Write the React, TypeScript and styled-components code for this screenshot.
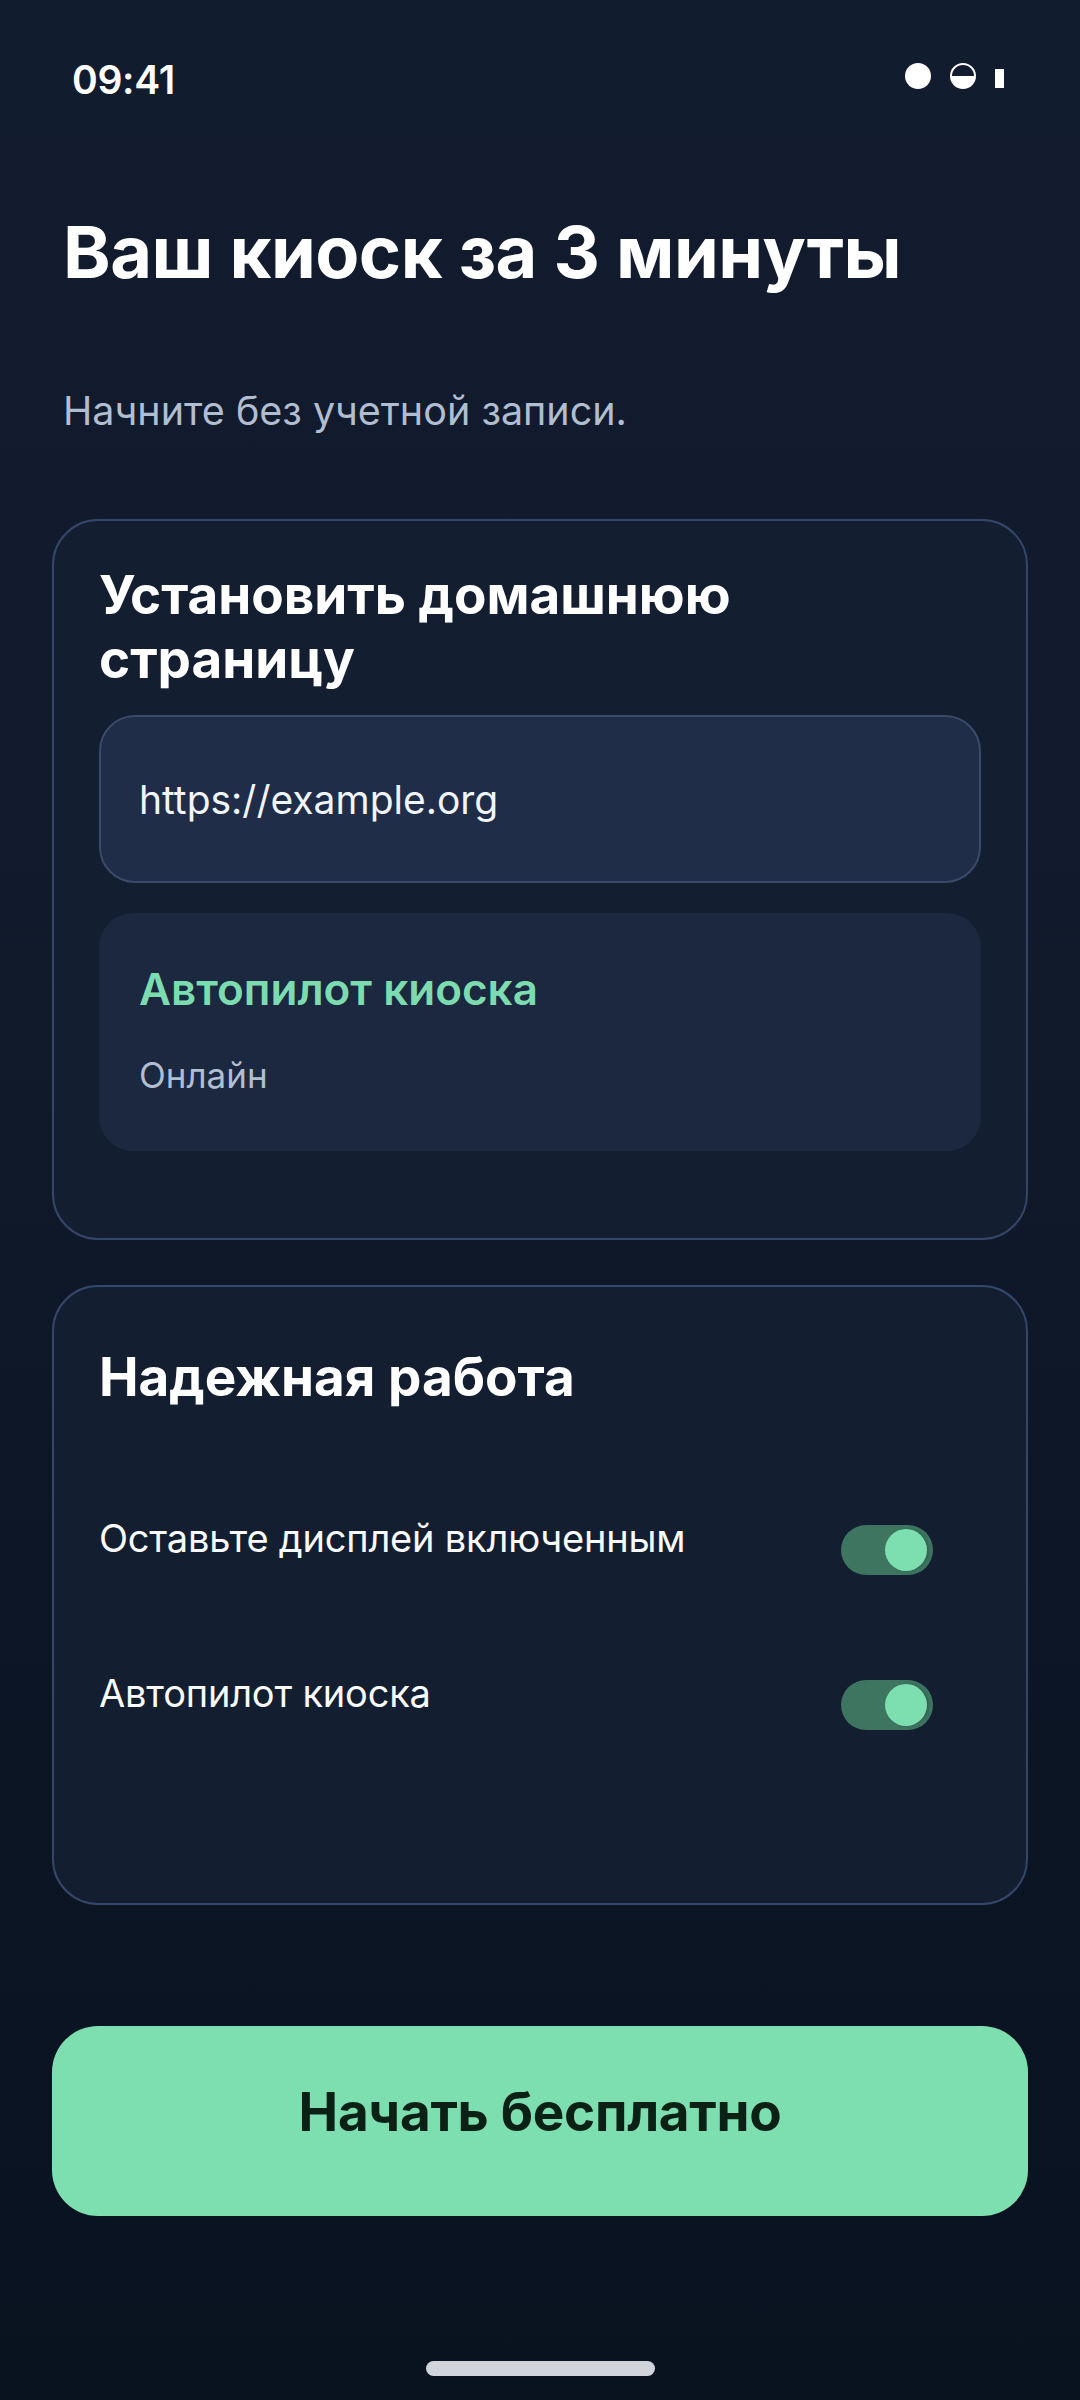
import React from "react"
import styled, { createGlobalStyle } from "styled-components"

const GlobalStyle = createGlobalStyle`
  html, body {
    margin: 0;
    padding: 0;
    background: #0a1220;
  }
  body {
    font-family: Inter, "Noto Sans", "DejaVu Sans", sans-serif;
    -webkit-font-smoothing: antialiased;
  }
  * {
    box-sizing: border-box;
  }
`

const Screen = styled.div`
  width: 1080px;
  min-height: 2400px;
  padding: 0 52px;
  display: flex;
  flex-direction: column;
  background: linear-gradient(180deg, #121c2f 0%, #111a2b 40%, #0c1524 75%, #09121f 100%);
  color: #ffffff;
`

const StatusBar = styled.div`
  margin-top: 53px;
  height: 52px;
  padding: 0 24px 0 20px;
  display: flex;
  align-items: center;
  justify-content: space-between;
`

const Clock = styled.span`
  font-size: 39px;
  font-weight: 600;
  letter-spacing: -0.3px;
`

const StatusIcons = styled.div`
  display: flex;
  align-items: flex-end;
  gap: 19px;
  padding-bottom: 6px;
`

const Dot = styled.span`
  width: 26px;
  height: 26px;
  border-radius: 50%;
  background: #ffffff;
`

const HalfDot = styled.span`
  width: 26px;
  height: 26px;
  border-radius: 50%;
  border: 2px solid #ffffff;
  background: linear-gradient(180deg, transparent 0 50%, #ffffff 50% 100%);
`

const Bar = styled.span`
  width: 9px;
  height: 19px;
  background: #ffffff;
  margin-bottom: 1px;
`

const Title = styled.h1`
  margin: 103px 0 0 11px;
  font-size: 72px;
  line-height: 88px;
  font-weight: 700;
  letter-spacing: -0.5px;
`

const Subtitle = styled.p`
  margin: 89px 0 0 11px;
  font-size: 39.5px;
  line-height: 52px;
  color: #b1bdd0;
`

const Card = styled.section<{ $top: number; $bottom: number; $gap: number }>`
  margin-top: ${(p) => p.$gap}px;
  border: 2px solid #34466a;
  border-radius: 46px;
  background: #141e31;
  padding: ${(p) => p.$top}px 45px ${(p) => p.$bottom}px;
  display: flex;
  flex-direction: column;
`

const CardTitle = styled.h2`
  margin: 0;
  font-size: 53px;
  line-height: 64px;
  font-weight: 700;
`

const UrlField = styled.div`
  margin-top: 24px;
  height: 168px;
  padding: 0 38px;
  display: flex;
  align-items: center;
  border: 2px solid #3a4a68;
  border-radius: 36px;
  background: #1f2d48;
  font-size: 39px;
  color: #f1f5f9;
`

const StatusBox = styled.div`
  margin-top: 30px;
  padding: 50px 40px 52px;
  border-radius: 34px;
  background: #1b2840;
  display: flex;
  flex-direction: column;
  gap: 36px;
`

const StatusTitle = styled.span`
  font-size: 44px;
  line-height: 52px;
  font-weight: 600;
  color: #7ddcaf;
`

const StatusText = styled.span`
  font-size: 35px;
  line-height: 48px;
  color: #b1bdd0;
`

const Rows = styled.div`
  margin-top: 104px;
  display: flex;
  flex-direction: column;
  gap: 93px;
`

const Row = styled.div`
  display: flex;
  align-items: flex-start;
  justify-content: space-between;
  padding-right: 48px;
`

const RowLabel = styled.span`
  font-size: 38px;
  line-height: 50px;
  letter-spacing: -0.2px;
  color: #f8fafc;
`

const Toggle = styled.span<{ $on: boolean }>`
  margin-top: 12px;
  width: 92px;
  height: 50px;
  border-radius: 25px;
  padding: 4px 6px;
  display: flex;
  justify-content: ${(p) => (p.$on ? "flex-end" : "flex-start")};
  background: ${(p) => (p.$on ? "#3d7561" : "#334155")};
`

const Knob = styled.span`
  width: 42px;
  height: 42px;
  border-radius: 50%;
  background: #7ddfb0;
  box-shadow: 2px 0 3px rgba(0, 0, 0, 0.18);
`

const StartButton = styled.button`
  margin-top: 121px;
  height: 190px;
  border: none;
  border-radius: 46px;
  background: #7ddfb0;
  color: #0b2116;
  font-family: inherit;
  font-size: 53px;
  font-weight: 700;
  letter-spacing: -0.3px;
  padding: 0 0 18px;
  display: flex;
  align-items: center;
  justify-content: center;
`

const HomeIndicator = styled.div`
  margin: 145px auto 0;
  width: 229px;
  height: 15px;
  border-radius: 8px;
  background: #d1d5db;
`

const settings = [
  { label: "Оставьте дисплей включенным", on: true },
  { label: "Автопилот киоска", on: true },
]

export default function App() {
  return (
    <>
      <GlobalStyle />
      <Screen>
        <StatusBar>
          <Clock>09:41</Clock>
          <StatusIcons>
            <Dot />
            <HalfDot />
            <Bar />
          </StatusIcons>
        </StatusBar>

        <Title>Ваш киоск за 3 минуты</Title>
        <Subtitle>Начните без учетной записи.</Subtitle>

        <Card $gap={82} $top={42} $bottom={87}>
          <CardTitle>
            Установить домашнюю
            <br />
            страницу
          </CardTitle>
          <UrlField>https://example.org</UrlField>
          <StatusBox>
            <StatusTitle>Автопилот киоска</StatusTitle>
            <StatusText>Онлайн</StatusText>
          </StatusBox>
        </Card>

        <Card $gap={45} $top={58} $bottom={173}>
          <CardTitle>Надежная работа</CardTitle>
          <Rows>
            {settings.map((s) => (
              <Row key={s.label}>
                <RowLabel>{s.label}</RowLabel>
                <Toggle $on={s.on}>
                  <Knob />
                </Toggle>
              </Row>
            ))}
          </Rows>
        </Card>

        <StartButton>Начать бесплатно</StartButton>
        <HomeIndicator />
      </Screen>
    </>
  )
}
